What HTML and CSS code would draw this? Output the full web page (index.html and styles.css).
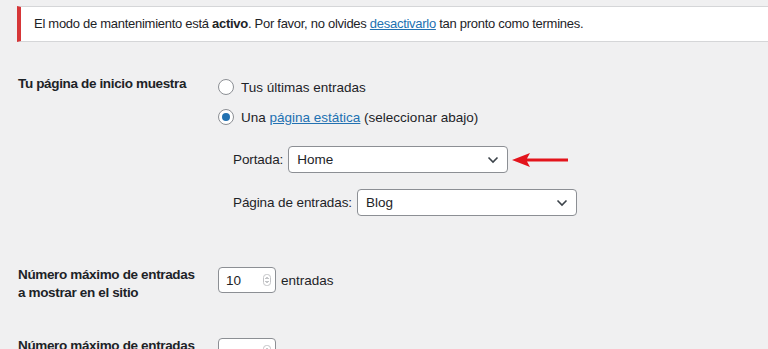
FILE: index.html
```html
<!DOCTYPE html>
<html lang="es">
<head>
    <meta charset="UTF-8">
    <meta name="viewport" content="width=device-width, initial-scale=1.0">
    <title>Ajustes de lectura</title>
    <link rel="stylesheet" href="styles.css">
</head>
<body>
    <!-- Maintenance notice -->
    <div class="notice">
        <p>El modo de mantenimiento está <strong>activo</strong>. Por favor, no olvides <a href="#">desactivarlo</a> tan pronto como termines.</p>
    </div>

    <!-- Front page setting -->
    <div class="form-row first">
        <div class="label">Tu página de inicio muestra</div>
        <div class="field">
            <label class="radio-line"><span class="radio"></span>Tus últimas entradas</label>
            <label class="radio-line"><span class="radio checked"></span>Una&nbsp;<a href="#">página estática</a>&nbsp;(seleccionar abajo)</label>
            <div class="sub-fields">
                <div class="sub-line">
                    <span>Portada:</span>
                    <div class="select">Home
                        <svg class="chevron" width="12" height="8" viewBox="0 0 12 8"><path d="M1.5 1.5 L6 6 L10.5 1.5" fill="none" stroke="#3c434a" stroke-width="1.6"/></svg>
                    </div>
                    <svg class="pointer" width="57" height="16" viewBox="0 0 57 16"><path d="M0 8 L18 1 L15 6.5 L56 6.5 L56 9.5 L15 9.5 L18 15 Z" fill="#e3141c"/></svg>
                </div>
                <div class="sub-line">
                    <span>Página de entradas:</span>
                    <div class="select">Blog
                        <svg class="chevron" width="12" height="8" viewBox="0 0 12 8"><path d="M1.5 1.5 L6 6 L10.5 1.5" fill="none" stroke="#3c434a" stroke-width="1.6"/></svg>
                    </div>
                </div>
            </div>
        </div>
    </div>

    <!-- Posts per page -->
    <div class="form-row">
        <div class="label">Número máximo de entradas a mostrar en el sitio</div>
        <div class="field inline">
            <div class="number">10
                <svg class="spin" width="8" height="12" viewBox="0 0 8 12"><rect x="0.5" y="0.5" width="7" height="11" rx="3" fill="none" stroke="#c3c4c7"/><path d="M2.5 5 L4 3.5 L5.5 5 M2.5 7 L4 8.5 L5.5 7" fill="none" stroke="#646970" stroke-width="0.8"/></svg>
            </div>
            <span>entradas</span>
        </div>
    </div>

    <div class="form-row last">
        <div class="label">Número máximo de entradas en el feed</div>
        <div class="field inline">
            <div class="number">
                <svg class="spin" width="8" height="12" viewBox="0 0 8 12"><rect x="0.5" y="0.5" width="7" height="11" rx="3" fill="none" stroke="#c3c4c7"/><path d="M2.5 5 L4 3.5 L5.5 5 M2.5 7 L4 8.5 L5.5 7" fill="none" stroke="#646970" stroke-width="0.8"/></svg>
            </div>
        </div>
    </div>
</body>
</html>
```

FILE: styles.css
```css
/* Page */
body {
    margin: 0;
    background-color: #f0f0f1;
    color: #1d2327;
    font-family: "Liberation Sans", Arial, sans-serif;
    font-size: 13.5px;
    overflow: hidden;
}

a {
    color: #2271b1;
    text-decoration: underline;
}

/* Notice */
.notice {
    margin: 6px 0 0 17px;
    background-color: white;
    border-top: 1px solid #d5d6d8;
    border-bottom: 1px solid #d5d6d8;
    border-left: 4px solid #d63638;
    padding: 0 13px;
    height: 34px;
    display: flex;
    align-items: center;
}

.notice p {
    margin: 0;
    font-size: 13px;
    line-height: 18px;
    letter-spacing: -0.28px;
}

/* Form rows */
.form-row {
    display: grid;
    grid-template-columns: 200px 1fr;
    padding-left: 18px;
    margin-top: 34px;
}

.form-row.first {
    margin-top: 33px;
}

.form-row.last {
    margin-top: 35px;
}

.label {
    font-weight: bold;
    line-height: 18px;
    letter-spacing: -0.35px;
    width: 180px;
}

.field {
    margin-top: 2px;
}

.field.inline {
    display: flex;
    align-items: center;
    gap: 5px;
    margin-top: 1px;
    align-self: start;
}

/* Radios */
.radio-line {
    display: flex;
    align-items: center;
    height: 20px;
    margin-bottom: 10px;
}

.radio {
    width: 14px;
    height: 14px;
    border: 1px solid #8c8f94;
    border-radius: 50%;
    background: white;
    margin-right: 7px;
    position: relative;
}

.radio.checked::after {
    content: "";
    position: absolute;
    width: 8px;
    height: 8px;
    border-radius: 50%;
    background: #2271b1;
    top: 3px;
    left: 3px;
}

/* Selects */
.sub-fields {
    padding-left: 15px;
    padding-top: 9px;
}

.sub-line {
    display: flex;
    align-items: center;
    gap: 5px;
    margin-bottom: 16px;
    letter-spacing: -0.1px;
}

.select {
    width: 202px;
    height: 25px;
    border: 1px solid #8c8f94;
    border-radius: 4px;
    background: white;
    padding: 0 8px;
    display: flex;
    align-items: center;
    justify-content: space-between;
    letter-spacing: 0;
}

.pointer {
    margin-left: -1px;
}

/* Number inputs */
.number {
    width: 45px;
    height: 24px;
    border: 1px solid #8c8f94;
    border-radius: 4px;
    background: white;
    padding: 0 4px 0 7px;
    display: flex;
    align-items: center;
    justify-content: space-between;
}

.number .spin:only-child {
    margin-left: auto;
}
```
